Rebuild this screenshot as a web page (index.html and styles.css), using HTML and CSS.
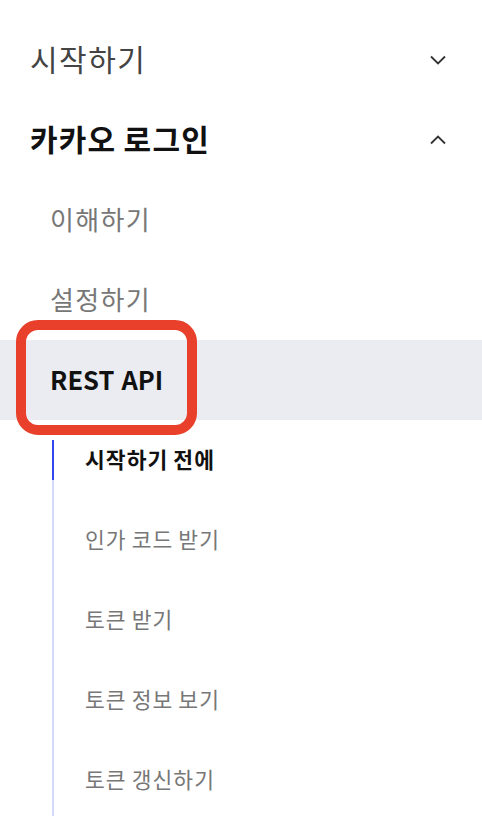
FILE: index.html
```html
<!DOCTYPE html>
<html lang="ko">
<head>
<meta charset="utf-8">
<link rel="stylesheet" href="styles.css">
</head>
<body>
<nav class="side">
  <div class="row top">
    <span class="label">시작하기</span>
    <svg class="chev" width="16" height="10" viewBox="0 0 16 10"><path d="M1 1.5 L8 8.5 L15 1.5" fill="none" stroke="#333" stroke-width="1.8"/></svg>
  </div>
  <div class="row top open">
    <span class="label">카카오 로그인</span>
    <svg class="chev" width="16" height="10" viewBox="0 0 16 10"><path d="M1 8.5 L8 1.5 L15 8.5" fill="none" stroke="#333" stroke-width="1.8"/></svg>
  </div>
  <div class="row second"><span class="label">이해하기</span></div>
  <div class="row second"><span class="label">설정하기</span></div>
  <div class="row second current">
    <span class="label latin">REST API</span>
    <span class="mark"></span>
  </div>
  <ul class="sub">
    <li class="item active">시작하기 전에</li>
    <li class="item">인가 코드 받기</li>
    <li class="item">토큰 받기</li>
    <li class="item">토큰 정보 보기</li>
    <li class="item">토큰 갱신하기</li>
  </ul>
</nav>
</body>
</html>
```
FILE: styles.css
```css
html, body {
  margin: 0;
  padding: 0;
  background: #fff;
}
body {
  font-family: "Noto Sans CJK KR", "Noto Sans", sans-serif;
  width: 482px;
  height: 816px;
  overflow: hidden;
}
.side {
  padding-top: 20px;
}
.row {
  height: 80px;
  display: flex;
  align-items: center;
  box-sizing: border-box;
  position: relative;
}
.label {
  margin-top: -4px;
}
.top {
  padding: 0 36px 0 30px;
  justify-content: space-between;
  font-size: 30px;
  letter-spacing: 0.05em;
  word-spacing: -0.08em;
  color: #444;
}
.top.open {
  font-weight: 700;
  color: #111;
  letter-spacing: 0.04em;
}
.chev {
  display: block;
}
.second {
  padding-left: 50px;
  font-size: 26px;
  letter-spacing: 0.05em;
  color: #777;
}
.current {
  background: #ebecf2;
  color: #111;
  font-weight: 700;
}
.latin {
  font-size: 25.5px;
  letter-spacing: 0;
}
.mark {
  position: absolute;
  left: 16px;
  top: -20px;
  width: 181px;
  height: 115px;
  box-sizing: border-box;
  border: 10px solid #e8402a;
  border-radius: 22px;
}
.sub {
  list-style: none;
  margin: 20px 0 0 52px;
  padding: 0;
  border-left: 2px solid #d6dafa;
  display: flex;
  flex-direction: column;
  gap: 40px;
  padding-bottom: 40px;
}
.item {
  height: 40px;
  display: flex;
  align-items: center;
  padding-left: 31px;
  padding-bottom: 3px;
  box-sizing: border-box;
  font-size: 21.5px;
  letter-spacing: 0.05em;
  word-spacing: -0.1em;
  color: #777;
  position: relative;
}
.item.active {
  color: #111;
  font-weight: 700;
}
.item.active::before {
  content: "";
  position: absolute;
  left: -2px;
  top: 0;
  width: 2px;
  height: 40px;
  background: #3349ee;
}
```
